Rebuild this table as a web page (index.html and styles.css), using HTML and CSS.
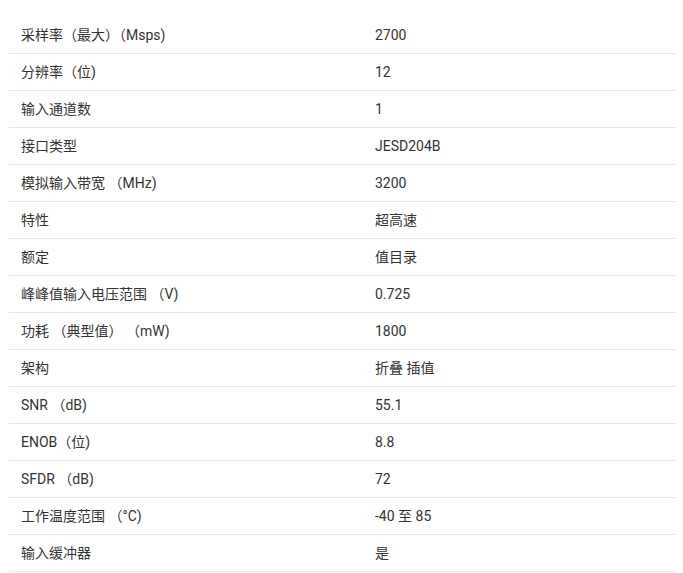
FILE: index.html
```html
<!DOCTYPE html>
<html lang="zh-CN">
<head>
<meta charset="utf-8">
<link rel="stylesheet" href="styles.css">
</head>
<body>
<table class="spec">
<tbody>
<tr><td>采样率（最大）（Msps)</td><td>2700</td></tr>
<tr><td>分辨率（位)</td><td>12</td></tr>
<tr><td>输入通道数</td><td>1</td></tr>
<tr><td>接口类型</td><td>JESD204B</td></tr>
<tr><td>模拟输入带宽 （MHz)</td><td>3200</td></tr>
<tr><td>特性</td><td>超高速</td></tr>
<tr><td>额定</td><td>值目录</td></tr>
<tr><td>峰峰值输入电压范围 （V)</td><td>0.725</td></tr>
<tr><td>功耗 （典型值） （mW)</td><td>1800</td></tr>
<tr><td>架构</td><td>折叠 插值</td></tr>
<tr><td>SNR （dB)</td><td>55.1</td></tr>
<tr><td>ENOB（位)</td><td>8.8</td></tr>
<tr><td>SFDR （dB)</td><td>72</td></tr>
<tr><td>工作温度范围 （°C)</td><td>-40 至 85</td></tr>
<tr><td>输入缓冲器</td><td>是</td></tr>
</tbody>
</table>
</body>
</html>
```
FILE: styles.css
```css
html, body {
  margin: 0;
  padding: 0;
  background: #fff;
}
body {
  padding: 17px 0 0 9px;
  font-family: Roboto, "Noto Sans CJK SC", sans-serif;
  font-size: 14px;
  color: #333;
}
.spec {
  width: 667px;
  border-collapse: collapse;
  table-layout: fixed;
}
.spec td {
  height: 36px;
  padding: 0 12px;
  border-bottom: 1px solid #e5e5e5;
  vertical-align: middle;
  line-height: 20px;
}
.spec td:first-child {
  width: 330px;
}
```
